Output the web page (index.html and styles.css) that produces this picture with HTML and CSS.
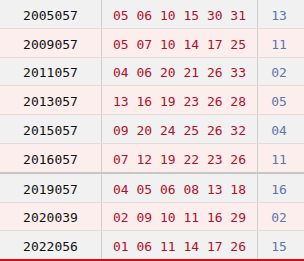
FILE: index.html
```html
<!DOCTYPE html>
<html>
<head>
<meta charset="utf-8">
<link rel="stylesheet" href="styles.css">
</head>
<body>
<div class="list">
  <div class="row grey"><div class="c issue">2005057</div><div class="c red">05 06 10 15 30 31</div><div class="c blue">13</div></div>
  <div class="row pink"><div class="c issue">2009057</div><div class="c red">05 07 10 14 17 25</div><div class="c blue">11</div></div>
  <div class="row grey"><div class="c issue">2011057</div><div class="c red">04 06 20 21 26 33</div><div class="c blue">02</div></div>
  <div class="row pink"><div class="c issue">2013057</div><div class="c red">13 16 19 23 26 28</div><div class="c blue">05</div></div>
  <div class="row grey"><div class="c issue">2015057</div><div class="c red">09 20 24 25 26 32</div><div class="c blue">04</div></div>
  <div class="row pink sep"><div class="c issue">2016057</div><div class="c red">07 12 19 22 23 26</div><div class="c blue">11</div></div>
  <div class="row grey"><div class="c issue">2019057</div><div class="c red">04 05 06 08 13 18</div><div class="c blue">16</div></div>
  <div class="row pink"><div class="c issue">2020039</div><div class="c red">02 09 10 11 16 29</div><div class="c blue">02</div></div>
  <div class="row grey last"><div class="c issue">2022056</div><div class="c red">01 06 11 14 17 26</div><div class="c blue">15</div></div>
</div>
</body>
</html>
```
FILE: styles.css
```css
html, body {
  margin: 0;
  padding: 0;
  background: #ffffff;
}
.list {
  width: 304px;
  font-family: "DejaVu Sans Mono", "Liberation Mono", monospace;
  font-size: 13px;
}
.row {
  display: grid;
  grid-template-columns: 102px 156px 1fr;
  height: 27.8px;
  border-bottom: 1px solid #e6d9d9;
}
.row.grey { background: #f1f1f1; }
.row.pink { background: #fdeeee; }
.row.sep { border-bottom: 2px solid #c6c6c6; }
.row.last { border-bottom: 2px solid #cc1111; }
.c {
  display: flex;
  align-items: center;
  justify-content: center;
  padding-top: 3px;
  box-sizing: border-box;
  white-space: pre;
}
.issue {
  color: #111111;
  border-right: 1px solid #cfcfcf;
}
.red {
  color: #b0102a;
  border-right: 1px solid #cfcfcf;
}
.blue {
  color: #6275ad;
  padding-right: 4px;
}
```
